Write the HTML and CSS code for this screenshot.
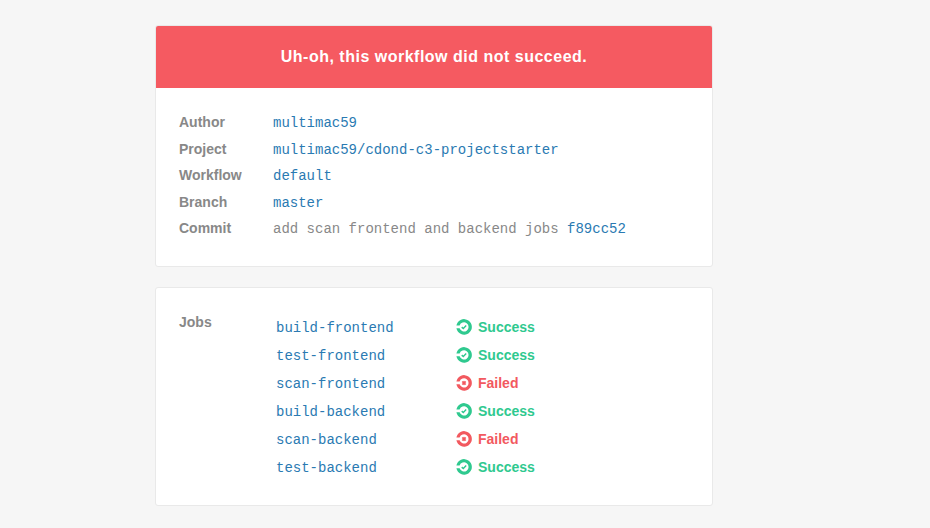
FILE: index.html
```html
<!DOCTYPE html>
<html lang="en">
<head>
<meta charset="utf-8">
<title>Workflow result</title>
<link rel="stylesheet" href="styles.css">
</head>
<body>
<svg class="defs" width="0" height="0" aria-hidden="true">
  <symbol id="ring" viewBox="0 0 16 16">
    <path d="M.4 6.5A7.8 7.8 0 1 1 .4 9.3H3.6A4.6 4.6 0 1 0 3.6 6.5Z" fill="currentColor"/>
  </symbol>
  <symbol id="ok" viewBox="0 0 16 16">
    <use href="#ring"/>
    <path d="M5.7 8.1L7.3 9.5L10.2 6.6" fill="none" stroke="currentColor" stroke-width="1.4"/>
  </symbol>
  <symbol id="bad" viewBox="0 0 16 16">
    <use href="#ring"/>
    <path d="M6.4 6.4L9.6 9.6M9.6 6.4L6.4 9.6" fill="none" stroke="currentColor" stroke-width="2"/>
  </symbol>
</svg>
<main class="page">
  <section class="card">
    <h1 class="banner"><span class="banner-text">Uh-oh, this workflow did not succeed.</span></h1>
    <dl class="details">
      <dt>Author</dt><dd><a>multimac59</a></dd>
      <dt>Project</dt><dd><a>multimac59/cdond-c3-projectstarter</a></dd>
      <dt>Workflow</dt><dd><a>default</a></dd>
      <dt>Branch</dt><dd><a>master</a></dd>
      <dt>Commit</dt><dd>add scan frontend and backend jobs <a>f89cc52</a></dd>
    </dl>
  </section>
  <section class="card jobs">
    <h2 class="jobs-title">Jobs</h2>
    <ul class="job-list">
      <li><a>build-frontend</a><span class="status success"><svg><use href="#ok"/></svg>Success</span></li>
      <li><a>test-frontend</a><span class="status success"><svg><use href="#ok"/></svg>Success</span></li>
      <li><a>scan-frontend</a><span class="status failed"><svg><use href="#bad"/></svg>Failed</span></li>
      <li><a>build-backend</a><span class="status success"><svg><use href="#ok"/></svg>Success</span></li>
      <li><a>scan-backend</a><span class="status failed"><svg><use href="#bad"/></svg>Failed</span></li>
      <li><a>test-backend</a><span class="status success"><svg><use href="#ok"/></svg>Success</span></li>
    </ul>
  </section>
</main>
</body>
</html>
```
FILE: styles.css
```css
* { box-sizing: border-box; }
body {
  margin: 0;
  background: #f6f6f6;
  color: #888;
  font: 14px "Liberation Sans", Arial, sans-serif;
}
.defs { position: absolute; }
.page {
  display: flex;
  flex-direction: column;
  gap: 20px;
  width: 558px;
  height: 528px;
  margin-left: 155px;
  padding-top: 25px;
}
.card {
  height: 242px;
  border: 1px solid #e9e9e9;
  border-radius: 3px;
  background: #fff;
  overflow: hidden;
}
.banner {
  height: 62px;
  margin: 0;
  background: #f55a61;
  color: #fff;
  font-size: 16px;
  line-height: 62px;
  letter-spacing: .5px;
  text-align: center;
}
.details {
  display: grid;
  grid-template-columns: 94px 1fr;
  grid-auto-rows: 26.5px;
  margin: 0;
  padding: 21px 23px;
  line-height: 26px;
}
dt { font-weight: bold; }
dd, .job-list a { font-family: "Liberation Mono", "Courier New", monospace; padding-top: 1px; }
dd { margin: 0; }
a { color: #2a7ab2; }
.jobs {
  display: grid;
  grid-template-columns: 97px 1fr;
  height: 219px;
  padding: 25px 23px;
}
.jobs-title { margin: 0; font-size: 14px; line-height: 18px; }
.job-list { margin: 0; padding: 0; list-style: none; }
.job-list li {
  display: grid;
  grid-template-columns: 180px 1fr;
  height: 28px;
  line-height: 28px;
}
.status { display: flex; align-items: center; gap: 6px; height: 28px; font-weight: bold; }
.status svg { width: 16px; height: 16px; }
.success { color: #2fc98f; }
.failed { color: #f2595f; }
```
